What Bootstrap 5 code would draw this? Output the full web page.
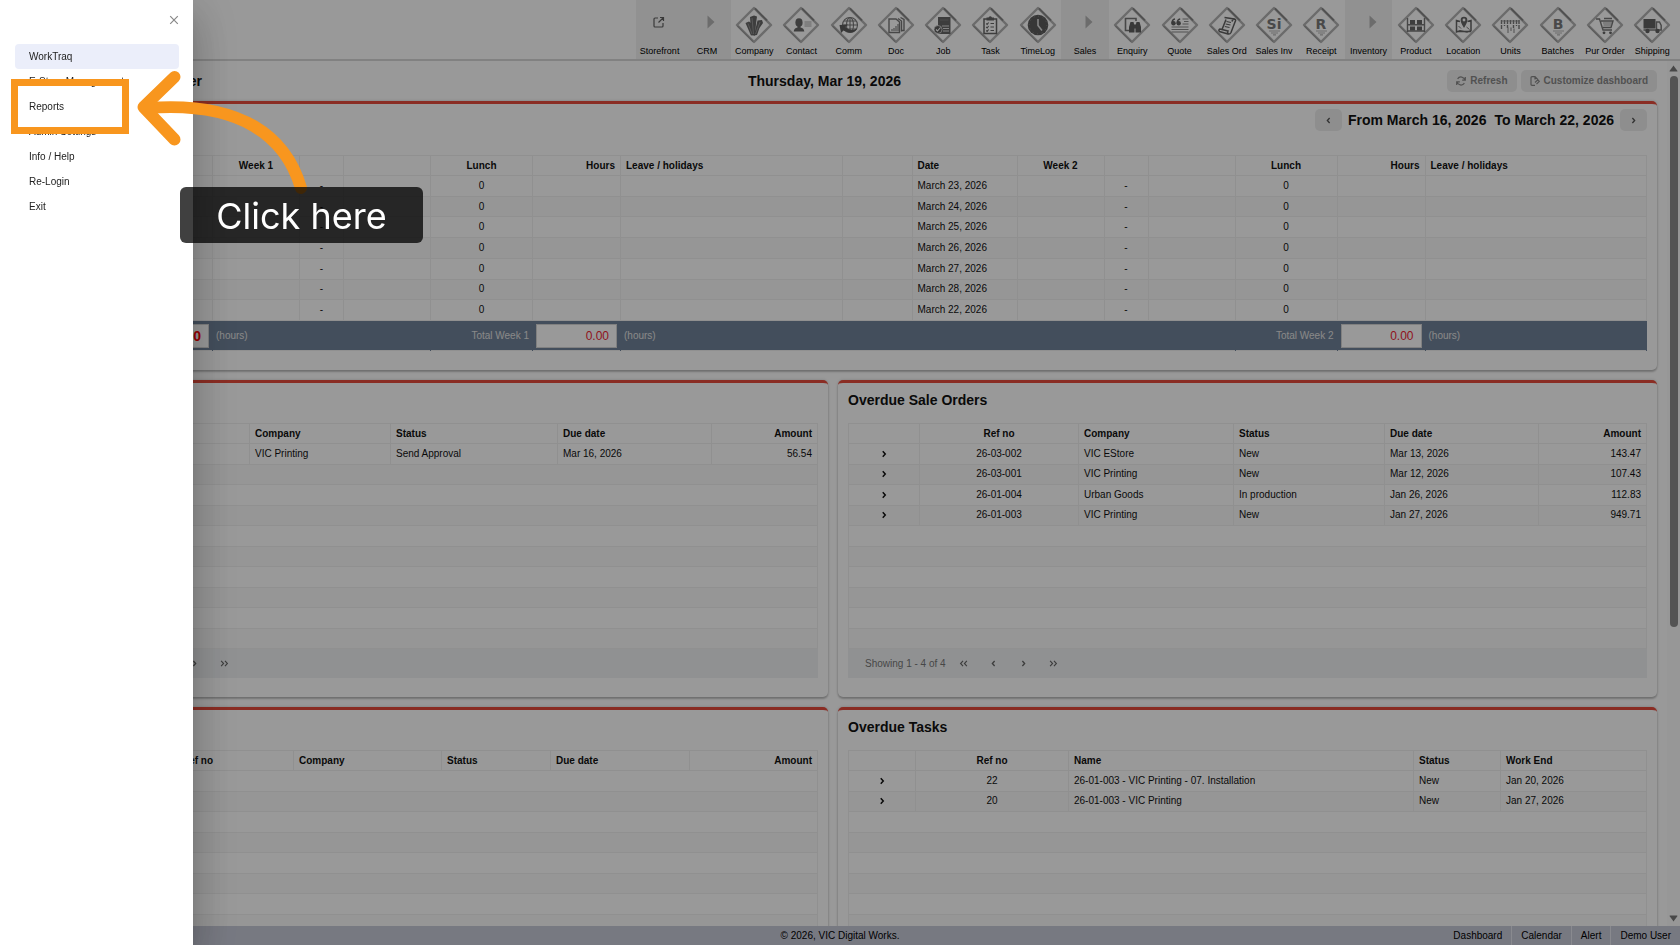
<!DOCTYPE html>
<html lang="en">
<head>
<meta charset="utf-8">
<meta name="viewport" content="width=device-width, initial-scale=1">
<title>WorkTraq Dashboard</title>
<link href="https://cdn.jsdelivr.net/npm/bootstrap@5.3.0/dist/css/bootstrap.min.css" rel="stylesheet">
<style>
  body { font-family: "Liberation Sans", Arial, sans-serif; font-size: 10px; line-height: 14px; color: #222; background: #fff; }
  a { color: inherit; text-decoration: none; }
  .title-text { font-size: 14px; line-height: 22px; font-weight: 700; color: #111; margin: 0; }

  /* module toolbar */
  .topbar { height: 61px; border-bottom: 2px solid #d8d8d8; }
  .modules { width: 1040px; margin-right: 4px; }
  .modules a { flex: 1 1 0; min-width: 0; padding-top: 6px; text-align: center; font-size: 9px; line-height: 14px; color: #000; white-space: nowrap; display: flex; flex-direction: column; align-items: center; }
  .modules a.group-head { background: #f2f2f2; }
  .modules svg { width: 38px; height: 38px; flex: none; display: block; }

  /* dashboard heading */
  .workarea { min-height: 0; }
  .dash-head { height: 40px; padding: 9px 0 0; margin-right: 10px; }
  .dash-owner { width: 202px; }
  .dash-date { left: 0; right: 8px; }
  .soft-btn { background: #ededed; color: #888; border: 0; border-radius: 5px; font-size: 10px; font-weight: 700; line-height: 14px; height: 22px; padding: 0 9px; display: inline-flex; align-items: center; justify-content: center; gap: 4px; }
  .soft-btn.step { width: 27px; padding: 0; color: #555; }

  .dash-body { padding-left: 9px; padding-right: 10px; }
  .panel { background: #fff; border-top: 3px solid #e74c3c; border-radius: 5px; box-shadow: 0 2px 2px rgba(0,0,0,.22), 0 0 3px rgba(0,0,0,.18); padding: 0 10px 19px; margin-bottom: 10px; }
  .panel-title { height: 40px; padding-top: 6px; }
  .period { padding-top: 5px; margin-bottom: 24px; gap: 6px; }
  .row.panels { --bs-gutter-x: 10px; }

  .table.dt { table-layout: fixed; margin: 0; font-size: 10px; line-height: 14px; color: #111; border-color: #f0f0f0; height: 226px; --bs-table-bg: transparent; --bs-table-color: #111; }
  .table.dt > :not(caption) > * > * { padding: 0 5px; vertical-align: middle; white-space: nowrap; box-shadow: none; }
  .table.dt thead tr, .table.dt tbody tr { height: 20px; }
  .table.dt tbody tr:nth-child(even) td { background: #fafafa; }
  .table.dt.week { height: 196px; }
  .table.dt.week tfoot tr { height: 30px; }
  .table.dt.week tfoot td { background: #708299; color: #e4e4e4; border-color: #708299; padding: 0 3px; }
  .sum-box { width: 100%; height: 24px; border: 1px solid #d5d5d5; background: #fff; color: #f02434; font-size: 12px; text-align: right; padding: 0 7px; display: block; border-radius: 0; }
  .sum-box.grand { font-weight: 700; font-size: 14px; color: #f00; }
  .expander { border: 0; background: none; padding: 0; width: 14px; height: 14px; line-height: 0; color: #111; display: block; margin: 0 auto; }

  .c70 { width: 70px } .c105 { width: 105px } .c88 { width: 88px } .c87 { width: 87px } .c44 { width: 44px } .c102 { width: 102px }
  .c71 { width: 71px } .c159 { width: 159px } .c155 { width: 155px } .c151 { width: 151px } .c154 { width: 154px }
  .c141 { width: 141px } .c167 { width: 167px } .c82 { width: 82px } .c192 { width: 192px } .c148 { width: 148px } .c109 { width: 109px } .c139 { width: 139px }
  .c67 { width: 67px } .c153 { width: 153px } .c345 { width: 345px }

  .pager { height: 29px; background: #f0f2f4; color: #777; padding-left: 17px; }
  .pager button { border: 0; background: none; color: #666; width: 30px; height: 20px; padding: 0; display: inline-flex; align-items: center; justify-content: center; }
  .pager span { margin-right: 3px; }

  .scroller { width: 13px; background: #fcfcfc; padding-top: 4px; }
  .scroll-thumb { width: 8px; height: 64%; border-radius: 4px; background: #8b8b8b; margin-top: 4px; }

  .statusbar { height: 19px; background: #c7cad8; color: #000; display: grid; grid-template-columns: 1fr auto 1fr; line-height: 20px; }
  .statusbar a { padding: 0 9px; border-left: 1px solid #e4e6ee; }
  .statusbar a:first-child { border-left: 0; }

  /* drawer and backdrop */
  .offcanvas-backdrop.show { opacity: .4; }
  .offcanvas.drawer { width: 193px; border: 0; transition: none; box-shadow: 0 11px 15px -7px rgba(0,0,0,.2), 0 24px 38px 3px rgba(0,0,0,.14), 0 9px 46px 8px rgba(0,0,0,.12); font-size: 10px; background: #fff; color: #333; }
  .drawer-head { height: 44px; padding: 13px 12px 0 0; }
  .drawer-head button { border: 0; background: none; padding: 0; width: 14px; height: 14px; line-height: 0; color: #888; }
  .drawer-nav { padding: 0 14px 0 15px; }
  .drawer-nav a { height: 25px; line-height: 25px; padding: 0 14px; border-radius: 4px; color: #222; }
  .drawer-nav a.current { background: #ebeefa; }

  /* guided-step callout */
  .callout { z-index: 1060; pointer-events: none; }
  .callout-box { left: 11px; top: 79px; width: 118px; height: 55px; border: 7px solid #f8961e; }
  .callout-arrow { left: 0; top: 0; }
  .callout-label { left: 180px; top: 187px; width: 243px; height: 56px; border-radius: 6px; background: rgba(0,0,0,.75); color: #fff; font-family: Inter, "Liberation Sans", sans-serif; font-size: 36px; line-height: 58px; text-align: center; white-space: nowrap; }
</style>
</head>
<body class="vh-100 overflow-hidden d-flex flex-column">

<svg class="d-none" aria-hidden="true">
  <defs>
    <symbol id="dia" viewBox="0 0 38 38">
      <path d="M19 2 L36 19 L19 36 L2 19 Z" fill="none" stroke="#b2b2b2" stroke-width="2.4" stroke-linejoin="round"/>
      <path d="M20 2.4 L32 14.4" stroke="#858585" stroke-width="1.8"/>
      <path d="M2.4 20 L18 35.6" stroke="#9a9a9a" stroke-width="1.2"/>
    </symbol>
    <symbol id="chev-r" viewBox="0 0 8 8"><path d="M3 1.8 L5 4 L3 6.2" fill="none" stroke="currentColor" stroke-width="1.2"/></symbol>
    <symbol id="chev-l" viewBox="0 0 8 8"><path d="M5 1.8 L3 4 L5 6.2" fill="none" stroke="currentColor" stroke-width="1.2"/></symbol>
    <symbol id="chev-rr" viewBox="0 0 8 8"><path d="M1 1.6 L3.2 4 L1 6.4 M4.4 1.6 L6.6 4 L4.4 6.4" fill="none" stroke="currentColor" stroke-width="1"/></symbol>
    <symbol id="chev-ll" viewBox="0 0 8 8"><path d="M3.600 1.6 L1.4 4 L3.600 6.4 M7 1.6 L4.8 4 L7 6.4" fill="none" stroke="currentColor" stroke-width="1"/></symbol>
  </defs>
</svg>

<header class="topbar d-flex justify-content-end flex-shrink-0">
  <nav class="modules d-flex" aria-label="Modules">
    <a href="#" class="group-head"><svg viewBox="0 0 38 38"><path d="M17 12 H14 Q13 12 13 13 V20 Q13 21 14 21 H21 Q22 21 22 20 V17 M19 11.500 H22.500 V15 M22.500 11.500 L17.500 16.500" fill="none" stroke="#606060" stroke-width="1.2"/></svg>Storefront</a>
    <a href="#" class="group-head"><svg viewBox="0 0 38 38"><path d="M19.500 9.500 L26.500 16 L19.500 22.500Z" fill="#b5b5b5"/></svg>CRM</a>
    <a href="#"><svg viewBox="0 0 38 38"><use href="#dia"/><g fill="#666"><path d="M15 11 L19 9.500 L22 10.500 L21 18 L20 29.500 H17.500 L15.500 18Z"/><path d="M10.500 17 L14 15.500 L16 17 L18.500 29 L16 29.500Z"/><path d="M22.500 14.500 L27 14 L28 17 L24.500 22 L22 29 L19 29.500Z"/></g><path d="M17 12 L18.500 28 M13 17.500 L17 28 M25 16 L20.500 28" stroke="#a5a5a5" stroke-width=".7"/></svg>Company</a>
    <a href="#"><svg viewBox="0 0 38 38"><use href="#dia"/><g fill="#686868"><ellipse cx="17" cy="16.500" rx="3.600" ry="4.300"/><path d="M15.500 19 H18.500 V21.500 Q22 22 22.300 25.500 H11.700 Q12 22 15.500 21.500Z"/></g><path d="M22.500 16 H29.500 M22.500 18 H29.500 M22.500 20 H29.500" stroke="#aaa" stroke-width="1"/></svg>Contact</a>
    <a href="#"><svg viewBox="0 0 38 38"><use href="#dia"/><g fill="none" stroke="#777" stroke-width="1.100"><circle cx="20" cy="19" r="7.500"/><ellipse cx="20" cy="19" rx="3.500" ry="7.500"/><path d="M20 11.500 V26.500 M12.500 19 H27.500 M14 15 H26 M14 23 H26"/></g><path d="M9.500 19 L18 18.500 L15.500 21 Q20 26 27.500 22.500 Q23 29.500 13.500 24.500 L11 27Z" fill="#5d5d5d"/></svg>Comm</a>
    <a href="#"><svg viewBox="0 0 38 38"><use href="#dia"/><g fill="none" stroke="#777" stroke-width="1.400"><path d="M12 13 H19 L22.500 16 V26.500 H12Z"/><path d="M21 12.500 L24.500 15 V25.500"/><path d="M23.500 11.500 L27 13.500 V24.500 H24.500"/></g><path d="M15 25 V23 M17 25 V22 M19 25 V20 M21 25 V18" stroke="#777" stroke-width="1.100"/></svg>Doc</a>
    <a href="#"><svg viewBox="0 0 38 38"><use href="#dia"/><rect x="14" y="11" width="12.500" height="17" fill="#666"/><path d="M16 14 H24.500" stroke="#7f7f7f"/><path d="M18 20 H25 M19 22.500 H25 M19 25 H25" stroke="#ddd" stroke-width="1.200"/><circle cx="14" cy="23.500" r="4" fill="#5c5c5c" stroke="#eee" stroke-width=".7"/><path d="M12 23.500 L13.500 25 L16.500 21.500" fill="none" stroke="#fff" stroke-width="1.100"/></svg>Job</a>
    <a href="#"><svg viewBox="0 0 38 38"><use href="#dia"/><rect x="13" y="13" width="12.500" height="14.500" fill="none" stroke="#666" stroke-width="1.500"/><path d="M15.500 14.500 V11.500 H17.500 Q19.300 9 21 11.500 H23 V14.500Z" fill="#666"/><path d="M15.200 17.500 L16.200 18.500 L17.600 16.500 M15.200 21 L16.200 22 L17.600 20 M15.200 24.500 L16.200 25.500 L17.600 23.500 M19.500 17.500 H23 M19.500 21 H23 M19.500 24.500 H23" fill="none" stroke="#666" stroke-width="1.100"/></svg>Task</a>
    <a href="#"><svg viewBox="0 0 38 38"><use href="#dia"/><circle cx="19" cy="19" r="10.300" fill="#5d5d5d"/><circle cx="19" cy="19" r="8.800" fill="none" stroke="#999" stroke-width=".8" stroke-dasharray=".8 3.808"/><path d="M19 13 V19.500 L23 24.500" fill="none" stroke="#ddd" stroke-width="1.600"/></svg>TimeLog</a>
    <a href="#" class="group-head"><svg viewBox="0 0 38 38"><path d="M19.500 9.500 L26.500 16 L19.500 22.500Z" fill="#b5b5b5"/></svg>Sales</a>
    <a href="#"><svg viewBox="0 0 38 38"><use href="#dia"/><path d="M17 24.500 H12.500 V12.500 H23 V15" fill="none" stroke="#777" stroke-width="1.600"/><g fill="#5f5f5f"><path d="M17.500 16 H20.500 L21.500 20 V26.500 H16 V21Z"/><path d="M23.500 16 H26.500 L28 21 V26.500 H22.500 V20Z"/><rect x="20.500" y="18.500" width="3" height="4"/></g></svg>Enquiry</a>
    <a href="#"><svg viewBox="0 0 38 38"><use href="#dia"/><g fill="#5f5f5f"><circle cx="12.500" cy="17.300" r="2.200"/><circle cx="17.700" cy="17.300" r="2.200"/></g><path d="M10.900 17 Q11 13.500 14 12.800 M16.100 17 Q16.200 13.500 19.200 12.800" fill="none" stroke="#5f5f5f" stroke-width="1.300"/><path d="M21.500 13 H27.500 M23 15.500 H27.500 M21.500 18 H27.500 M10.500 21 H27.500 M10.500 23.500 H27.500 M10.500 26 H27.500" stroke="#8a8a8a" stroke-width="1.100"/></svg>Quote</a>
    <a href="#"><svg viewBox="0 0 38 38"><use href="#dia"/><path d="M16.500 11.500 L26.500 13 Q28.500 13.800 27 16 L23 26.500 Q22 28.500 20 28 L11.500 25.500 Q10 24 12 23 L14 23.500 L18 13.500 M26.500 13 Q24.500 13 24 15.500 M14 23.500 L20 25 Q19 27 20.500 28" fill="none" stroke="#626262" stroke-width="1.500"/><path d="M18.500 15.500 L23 16.500 M17.700 18 L22.500 19 M16.800 20.500 L21.500 21.500" stroke="#626262" stroke-width="1.100"/></svg>Sales Ord</a>
    <a href="#"><svg viewBox="0 0 38 38"><use href="#dia"/><text x="19" y="23" text-anchor="middle" font-family="DejaVu Sans, sans-serif" font-size="14" font-weight="700" fill="#7b7b7b">Si</text><path d="M14 25 H25 M16 27 H23 M18 28.800 H21" stroke="#b5b5b5" stroke-width="1.200"/></svg>Sales Inv</a>
    <a href="#"><svg viewBox="0 0 38 38"><use href="#dia"/><text x="19" y="23" text-anchor="middle" font-family="DejaVu Sans, sans-serif" font-size="14" font-weight="700" fill="#7b7b7b">R</text><path d="M14 25 H25 M16 27 H23 M18 28.800 H21" stroke="#b5b5b5" stroke-width="1.200"/></svg>Receipt</a>
    <a href="#" class="group-head"><svg viewBox="0 0 38 38"><path d="M19.500 9.500 L26.500 16 L19.500 22.500Z" fill="#b5b5b5"/></svg>Inventory</a>
    <a href="#"><svg viewBox="0 0 38 38"><use href="#dia"/><path d="M10.500 12 V26 M27.500 12 V26 M10.500 18.700 H27.500 M10.500 25 H27.500" stroke="#777" stroke-width="1.400"/><path d="M13 14 H18 V18 H13Z M20 14 H25 V18 H20Z M13 20.500 H18 V24.500 H13Z M20 20.500 H25 V24.500 H20Z" fill="#666"/></svg>Product</a>
    <a href="#"><svg viewBox="0 0 38 38"><use href="#dia"/><path d="M16 15.500 L12.500 14.500 V26 L16 24.800 L23 26 L27 24.800 V14.500 L23.500 15.500 M12.500 25.500 H27" fill="none" stroke="#666" stroke-width="1.500"/><path d="M20 22 Q16.300 16 16.700 14 A3.300 3.300 0 0 1 23.300 14 Q23.700 16 20 22Z" fill="#666"/><circle cx="20" cy="14" r="1.400" fill="#fff"/><path d="M14.500 20 L17 22.500 M22.500 21 L25.500 23.500" stroke="#777"/></svg>Location</a>
    <a href="#"><svg viewBox="0 0 38 38"><use href="#dia"/><path d="M10.500 14 V24 M13.500 14 V20 M16.500 14 V22 M19.500 14 V19 M22.500 14 V22 M25.500 14 V20 M28 14 V24" stroke="#7a7a7a" stroke-width="1.400" stroke-dasharray="4 1"/><path d="M10 15 H28.500" stroke="#8a8a8a" stroke-width=".8"/><path d="M17 21.500 V27 M20 21.500 V25 M23 22.500 V27" stroke="#999" stroke-width="1.200"/></svg>Units</a>
    <a href="#"><svg viewBox="0 0 38 38"><use href="#dia"/><text x="19" y="23" text-anchor="middle" font-family="DejaVu Sans, sans-serif" font-size="14" font-weight="700" fill="#7b7b7b">B</text><path d="M14 25 H25 M16 27 H23 M18 28.800 H21" stroke="#b5b5b5" stroke-width="1.200"/></svg>Batches</a>
    <a href="#"><svg viewBox="0 0 38 38"><use href="#dia"/><path d="M10 13 H13.500 L17 24 H26 M15 15 H27 L25 21.500 H17 M18 12.500 H26" fill="none" stroke="#777" stroke-width="1.400"/><path d="M17 17 H26 M17.500 19 H25.500" stroke="#999" stroke-width=".9"/><circle cx="18" cy="26.800" r="1.400" fill="#666"/><circle cx="24.500" cy="26.800" r="1.400" fill="#666"/></svg>Pur Order</a>
    <a href="#"><svg viewBox="0 0 38 38"><use href="#dia"/><rect x="10.500" y="13" width="12" height="9.500" fill="#626262"/><path d="M10.500 24 H28 M23.500 16 H26.500 L28.200 19.500 V24 H23.500Z" fill="none" stroke="#777" stroke-width="1.400"/><circle cx="14.500" cy="25" r="2.200" fill="#626262"/><circle cx="24.500" cy="25" r="2.200" fill="#626262"/></svg>Shipping</a>
  </nav>
</header>

<div class="workarea d-flex flex-grow-1 overflow-hidden">
  <main class="flex-grow-1 overflow-hidden">
    <div class="dash-head">
      <div class="d-flex position-relative">
        <h1 class="title-text dash-owner text-end me-auto">Demo User</h1>
        <button type="button" class="soft-btn me-1"><svg width="10" height="10" viewBox="0 0 10 10" fill="none" stroke="currentColor" stroke-width="1.200"><path d="M9 4.200 A4.100 4.100 0 0 0 1.600 2.800 M1 5.800 A4.100 4.100 0 0 0 8.400 7.200 M9.300 1 V4.200 H6.200 M.7 9 V5.800 H3.800"/></svg>Refresh</button>
        <button type="button" class="soft-btn"><svg width="10" height="10" viewBox="0 0 10 10" fill="none" stroke="currentColor" stroke-width="1.200"><path d="M5 9.300 H2 Q1 9.300 1 8.300 V1.700 Q1 .7 2 .7 H5 L8 3.600 M5 .7 V3.500 M5 6.500 L7.800 3.800 L9.300 5.300 L6.500 8.200"/></svg>Customize dashboard</button>
        <div class="title-text dash-date position-absolute top-0 text-center pe-none">Thursday, Mar 19, 2026</div>
      </div>
    </div>

    <div class="dash-body">
      <section class="panel">
        <div class="period d-flex justify-content-end align-items-center">
          <button type="button" class="soft-btn step" aria-label="Previous period"><svg width="9" height="9"><use href="#chev-l"/></svg></button>
          <div class="title-text d-flex gap-2"><span>From March 16, 2026</span><span>To March 22, 2026</span></div>
          <button type="button" class="soft-btn step" aria-label="Next period"><svg width="9" height="9"><use href="#chev-r"/></svg></button>
        </div>
        <table class="table table-bordered dt week">
          <colgroup><col class="c88"><col class="c105"><col class="c87"><col class="c44"><col class="c87"><col class="c102"><col class="c88"><col><col class="c70"><col class="c105"><col class="c87"><col class="c44"><col class="c87"><col class="c102"><col class="c88"><col></colgroup>
          <thead><tr><th></th><th>Date</th><th class="text-center">Week 1</th><th></th><th></th><th class="text-center">Lunch</th><th class="text-end">Hours</th><th>Leave / holidays</th><th></th><th>Date</th><th class="text-center">Week 2</th><th></th><th></th><th class="text-center">Lunch</th><th class="text-end">Hours</th><th>Leave / holidays</th></tr></thead>
          <tbody>
            <tr><td></td><td>March 16, 2026</td><td></td><td class="text-center">-</td><td></td><td class="text-center">0</td><td></td><td></td><td></td><td>March 23, 2026</td><td></td><td class="text-center">-</td><td></td><td class="text-center">0</td><td></td><td></td></tr>
            <tr><td></td><td>March 17, 2026</td><td></td><td class="text-center">-</td><td></td><td class="text-center">0</td><td></td><td></td><td></td><td>March 24, 2026</td><td></td><td class="text-center">-</td><td></td><td class="text-center">0</td><td></td><td></td></tr>
            <tr><td></td><td>March 18, 2026</td><td></td><td class="text-center">-</td><td></td><td class="text-center">0</td><td></td><td></td><td></td><td>March 25, 2026</td><td></td><td class="text-center">-</td><td></td><td class="text-center">0</td><td></td><td></td></tr>
            <tr><td></td><td>March 19, 2026</td><td></td><td class="text-center">-</td><td></td><td class="text-center">0</td><td></td><td></td><td></td><td>March 26, 2026</td><td></td><td class="text-center">-</td><td></td><td class="text-center">0</td><td></td><td></td></tr>
            <tr><td></td><td>March 20, 2026</td><td></td><td class="text-center">-</td><td></td><td class="text-center">0</td><td></td><td></td><td></td><td>March 27, 2026</td><td></td><td class="text-center">-</td><td></td><td class="text-center">0</td><td></td><td></td></tr>
            <tr><td></td><td>March 21, 2026</td><td></td><td class="text-center">-</td><td></td><td class="text-center">0</td><td></td><td></td><td></td><td>March 28, 2026</td><td></td><td class="text-center">-</td><td></td><td class="text-center">0</td><td></td><td></td></tr>
            <tr><td></td><td>March 22, 2026</td><td></td><td class="text-center">-</td><td></td><td class="text-center">0</td><td></td><td></td><td></td><td>March 22, 2026</td><td></td><td class="text-center">-</td><td></td><td class="text-center">0</td><td></td><td></td></tr>
          </tbody>
          <tfoot><tr>
            <td class="text-end"><label for="sumAll">Total</label></td>
            <td><input id="sumAll" class="sum-box grand" value="0.00" readonly></td>
            <td colspan="3">(hours)</td>
            <td class="text-end"><label for="sum1">Total Week 1</label></td>
            <td><input id="sum1" class="sum-box" value="0.00" readonly></td>
            <td colspan="6">(hours)</td>
            <td class="text-end"><label for="sum2">Total Week 2</label></td>
            <td><input id="sum2" class="sum-box" value="0.00" readonly></td>
            <td>(hours)</td>
          </tr></tfoot>
        </table>
      </section>

      <div class="row panels">
        <div class="col-6"><section class="panel">
          <h2 class="title-text panel-title">Quotes</h2>
          <table class="table table-bordered dt">
            <colgroup><col class="c71"><col class="c159"><col class="c141"><col class="c167"><col class="c154"><col></colgroup>
            <thead><tr><th></th><th class="text-center">Ref no</th><th>Company</th><th>Status</th><th>Due date</th><th class="text-end">Amount</th></tr></thead>
            <tbody>
              <tr><td></td><td></td><td>VIC Printing</td><td>Send Approval</td><td>Mar 16, 2026</td><td class="text-end">56.54</td></tr>
              <tr><td colspan="6"></td></tr><tr><td colspan="6"></td></tr><tr><td colspan="6"></td></tr>
              <tr><td colspan="6"></td></tr><tr><td colspan="6"></td></tr><tr><td colspan="6"></td></tr>
              <tr><td colspan="6"></td></tr><tr><td colspan="6"></td></tr><tr><td colspan="6"></td></tr>
            </tbody>
          </table>
          <div class="pager d-flex align-items-center">
            <span>Showing 1 - 1 of 1</span>
            <button type="button" aria-label="First page"><svg width="9" height="9"><use href="#chev-ll"/></svg></button>
            <button type="button" aria-label="Previous page"><svg width="9" height="9"><use href="#chev-l"/></svg></button>
            <button type="button" aria-label="Next page"><svg width="9" height="9"><use href="#chev-r"/></svg></button>
            <button type="button" aria-label="Last page"><svg width="9" height="9"><use href="#chev-rr"/></svg></button>
          </div>
        </section></div>

        <div class="col-6"><section class="panel">
          <h2 class="title-text panel-title">Overdue Sale Orders</h2>
          <table class="table table-bordered dt">
            <colgroup><col class="c71"><col class="c159"><col class="c155"><col class="c151"><col class="c154"><col></colgroup>
            <thead><tr><th></th><th class="text-center">Ref no</th><th>Company</th><th>Status</th><th>Due date</th><th class="text-end">Amount</th></tr></thead>
            <tbody>
              <tr><td><button type="button" class="expander" aria-label="Expand"><svg width="10" height="10"><use href="#chev-r"/></svg></button></td><td class="text-center">26-03-002</td><td>VIC EStore</td><td>New</td><td>Mar 13, 2026</td><td class="text-end">143.47</td></tr>
              <tr><td><button type="button" class="expander" aria-label="Expand"><svg width="10" height="10"><use href="#chev-r"/></svg></button></td><td class="text-center">26-03-001</td><td>VIC Printing</td><td>New</td><td>Mar 12, 2026</td><td class="text-end">107.43</td></tr>
              <tr><td><button type="button" class="expander" aria-label="Expand"><svg width="10" height="10"><use href="#chev-r"/></svg></button></td><td class="text-center">26-01-004</td><td>Urban Goods</td><td>In production</td><td>Jan 26, 2026</td><td class="text-end">112.83</td></tr>
              <tr><td><button type="button" class="expander" aria-label="Expand"><svg width="10" height="10"><use href="#chev-r"/></svg></button></td><td class="text-center">26-01-003</td><td>VIC Printing</td><td>New</td><td>Jan 27, 2026</td><td class="text-end">949.71</td></tr>
              <tr><td colspan="6"></td></tr><tr><td colspan="6"></td></tr><tr><td colspan="6"></td></tr>
              <tr><td colspan="6"></td></tr><tr><td colspan="6"></td></tr><tr><td colspan="6"></td></tr>
            </tbody>
          </table>
          <div class="pager d-flex align-items-center">
            <span>Showing 1 - 4 of 4</span>
            <button type="button" aria-label="First page"><svg width="9" height="9"><use href="#chev-ll"/></svg></button>
            <button type="button" aria-label="Previous page"><svg width="9" height="9"><use href="#chev-l"/></svg></button>
            <button type="button" aria-label="Next page"><svg width="9" height="9"><use href="#chev-r"/></svg></button>
            <button type="button" aria-label="Last page"><svg width="9" height="9"><use href="#chev-rr"/></svg></button>
          </div>
        </section></div>

        <div class="col-6"><section class="panel">
          <h2 class="title-text panel-title">Invoices</h2>
          <table class="table table-bordered dt">
            <colgroup><col class="c82"><col class="c192"><col class="c148"><col class="c109"><col class="c139"><col></colgroup>
            <thead><tr><th></th><th class="text-center">Ref no</th><th>Company</th><th>Status</th><th>Due date</th><th class="text-end">Amount</th></tr></thead>
            <tbody>
              <tr><td colspan="6"></td></tr><tr><td colspan="6"></td></tr><tr><td colspan="6"></td></tr><tr><td colspan="6"></td></tr><tr><td colspan="6"></td></tr>
              <tr><td colspan="6"></td></tr><tr><td colspan="6"></td></tr><tr><td colspan="6"></td></tr><tr><td colspan="6"></td></tr><tr><td colspan="6"></td></tr>
            </tbody>
          </table>
        </section></div>

        <div class="col-6"><section class="panel">
          <h2 class="title-text panel-title">Overdue Tasks</h2>
          <table class="table table-bordered dt">
            <colgroup><col class="c67"><col class="c153"><col class="c345"><col class="c87"><col></colgroup>
            <thead><tr><th></th><th class="text-center">Ref no</th><th>Name</th><th>Status</th><th>Work End</th></tr></thead>
            <tbody>
              <tr><td><button type="button" class="expander" aria-label="Expand"><svg width="10" height="10"><use href="#chev-r"/></svg></button></td><td class="text-center">22</td><td>26-01-003 - VIC Printing - 07. Installation</td><td>New</td><td>Jan 20, 2026</td></tr>
              <tr><td><button type="button" class="expander" aria-label="Expand"><svg width="10" height="10"><use href="#chev-r"/></svg></button></td><td class="text-center">20</td><td>26-01-003 - VIC Printing</td><td>New</td><td>Jan 27, 2026</td></tr>
              <tr><td colspan="5"></td></tr><tr><td colspan="5"></td></tr><tr><td colspan="5"></td></tr><tr><td colspan="5"></td></tr>
              <tr><td colspan="5"></td></tr><tr><td colspan="5"></td></tr><tr><td colspan="5"></td></tr><tr><td colspan="5"></td></tr>
            </tbody>
          </table>
        </section></div>
      </div>
    </div>
  </main>
  <div class="scroller d-flex flex-column align-items-center flex-shrink-0" aria-hidden="true">
    <svg width="9" height="7" viewBox="0 0 9 7"><path d="M4.500 .5 L8.500 6 Q8.500 6.500 8 6.500 H1 Q.5 6.500 .5 6Z" fill="#777"/></svg>
    <div class="scroll-thumb"></div>
    <svg class="mt-auto mb-1" width="9" height="7" viewBox="0 0 9 7"><path d="M4.500 6.500 L8.500 1 Q8.500 .5 8 .5 H1 Q.5 .5 .5 1Z" fill="#777"/></svg>
  </div>
</div>

<footer class="statusbar flex-shrink-0">
  <div></div>
  <div>© 2026, VIC Digital Works.</div>
  <nav class="d-flex justify-content-end" aria-label="Shortcuts"><a href="#">Dashboard</a><a href="#">Calendar</a><a href="#">Alert</a><a href="#">Demo User</a></nav>
</footer>

<div class="offcanvas-backdrop show"></div>
<aside class="offcanvas offcanvas-start show drawer" data-bs-backdrop="false" data-bs-scroll="true" tabindex="-1" aria-label="Main menu">
  <div class="drawer-head text-end">
    <button type="button" aria-label="Close"><svg width="14" height="14" viewBox="0 0 14 14"><path d="M3.200 3.200 L10.800 10.800 M10.800 3.200 L3.200 10.800" stroke="currentColor" stroke-width="1.200"/></svg></button>
  </div>
  <nav class="drawer-nav d-flex flex-column">
    <a href="#" class="current">WorkTraq</a>
    <a href="#">E-Store Management</a>
    <a href="#">Reports</a>
    <a href="#">Admin Settings</a>
    <a href="#">Info / Help</a>
    <a href="#">Re-Login</a>
    <a href="#">Exit</a>
  </nav>
</aside>

<div class="callout callout-box position-absolute"></div>
<svg class="callout callout-arrow position-absolute" width="430" height="250" viewBox="0 0 430 250" fill="none" stroke="#f8961e" stroke-width="12" stroke-linecap="round" stroke-linejoin="round" aria-hidden="true">
  <path d="M301 188 C286 137 242 101 148 108"/>
  <path d="M174.500 77 L143.500 107 L174.500 139.500"/>
</svg>
<div class="callout callout-label position-absolute">Click here</div>

<script src="https://cdn.jsdelivr.net/npm/bootstrap@5.3.0/dist/js/bootstrap.bundle.min.js"></script>
</body>
</html>
